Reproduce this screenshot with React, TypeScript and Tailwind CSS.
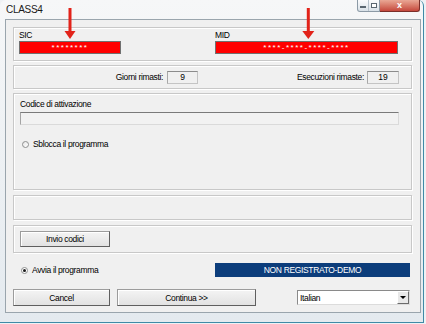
export default function App() {
  const txt = "text-[8.5px] leading-[10px] tracking-[-0.35px] text-black whitespace-nowrap";
  const group =
    "w-[399px] shrink-0 border border-[#c8c8c8] shadow-[inset_1px_1px_0_#ffffff,1px_1px_0_#ffffff]";
  const btn =
    "flex items-center justify-center border border-[#9c9c9c] border-r-[#5f5f5f] border-b-[#5f5f5f] bg-gradient-to-b from-[#f4f4f4] to-[#e2e2e2] shadow-[inset_1px_1px_0_#ffffff] text-[8.5px] leading-[10px] tracking-[-0.35px] text-black";
  const sunken =
    "flex items-center justify-center h-[13px] bg-[#f0f0f0] border border-[#c4c4c4] border-t-[#8c8c8c] border-l-[#a8a8a8] text-[8.5px] leading-[10px] text-black";

  return (
    <div className="w-[426px] h-[324px] bg-[#eef1f4] font-['Liberation_Sans',Arial,sans-serif] relative overflow-hidden">
      <div className="w-[424px] h-[323px] relative rounded-t-[6px] border-r border-b border-[#3f8aa6] bg-gradient-to-b from-[#f6f7f8] to-[#e4eaef] flex flex-col">
        <div className="h-[19px] shrink-0 flex items-start pl-[6px] pt-[4px] text-[10px] leading-[11px] tracking-[-0.3px] text-[#1a1a1a]">
          CLASS4
        </div>

        {/* caption buttons */}
        <div className="absolute top-0 left-[357px] flex">
          <div className="w-[23px] h-[12px] flex rounded-bl-[3px] border border-t-0 border-[#8c9aa6] bg-gradient-to-b from-[#fbfcfd] to-[#d9e1e8]">
            <div className="w-[11px] h-full flex items-center justify-center border-r border-[#b7c2cb]">
              <div className="w-[6px] h-[2px] mt-[3px] border border-[#5a6670] bg-white" />
            </div>
            <div className="w-[11px] h-full flex items-center justify-center">
              <div className="w-[6px] h-[5px] border border-[#5a6670] bg-white" />
            </div>
          </div>
          <div className="w-[40px] h-[12px] flex items-center justify-center rounded-br-[3px] border border-t-0 border-l-0 border-[#7b2f2a] bg-gradient-to-b from-[#e9a795] to-[#c4473c] text-white text-[9px] leading-[9px] font-bold">
            x
          </div>
        </div>

        {/* client */}
        <div className="ml-[5px] w-[416px] h-[294px] shrink-0 border border-[#9aa5ad] bg-[#f0f0f0] pl-[7px] pt-[7px] flex flex-col">
          {/* SIC / MID */}
          <div className={`${group} h-[34px] flex pl-[5px] pt-[2px]`}>
            <div className="w-[102px] flex flex-col">
              <span className={txt}>SIC</span>
              <div className="mt-[1px] h-[13px] bg-[#ff0000] border border-[#707070] flex items-center justify-center text-white text-[8px] leading-[8px] tracking-[1.5px]">
                ********
              </div>
            </div>
            <div className="ml-[94px] w-[183px] flex flex-col">
              <span className={txt}>MID</span>
              <div className="mt-[1px] h-[13px] bg-[#ff0000] border border-[#707070] flex items-center justify-center text-white text-[8px] leading-[8px] tracking-[1.5px]">
                ****-****-****-****
              </div>
            </div>
          </div>

          {/* counters */}
          <div className={`${group} h-[24px] mt-[4px] flex items-center`}>
            <div className="w-[184px] flex items-center justify-end">
              <span className={txt}>Giorni rimasti:</span>
              <div className={`${sunken} w-[31px] ml-[4px]`}>9</div>
            </div>
            <div className="w-[201px] flex items-center justify-end">
              <span className={txt}>Esecuzioni rimaste:</span>
              <div className={`${sunken} w-[32px] ml-[3px]`}>19</div>
            </div>
          </div>

          {/* activation */}
          <div className={`${group} h-[97px] mt-[4px] flex flex-col pl-[6px] pt-[5px]`}>
            <span className={txt}>Codice di attivazione</span>
            <div className="mt-[3px] w-[379px] h-[13px] bg-[#f2f2f2] border border-[#dadada] border-t-[#7a7a7a] border-l-[#a4a4a4]" />
            <div className="mt-[14px] h-[10px] flex items-center">
              <div className="ml-[2px] w-[7px] h-[7px] rounded-full border border-[#8e8f8f] bg-gradient-to-br from-[#e6e6e6] to-[#ffffff]" />
              <span className={`${txt} ml-[4px]`}>Sblocca il programma</span>
            </div>
          </div>

          <div className={`${group} h-[25px] mt-[5px]`} />

          <div className={`${group} h-[28px] mt-[5px] flex pl-[6px] pt-[5px]`}>
            <div className={`${btn} w-[90px] h-[16px]`}>Invio codici</div>
          </div>

          {/* status row */}
          <div className="mt-[10px] h-[14px] flex items-center">
            <div className="w-[202px] flex items-center">
              <div className="ml-[8px] w-[7px] h-[7px] rounded-full border border-[#8e8f8f] bg-white flex items-center justify-center">
                <div className="w-[3px] h-[3px] rounded-full bg-[#1a1a1a]" />
              </div>
              <span className={`${txt} ml-[4px]`}>Avvia il programma</span>
            </div>
            <div className="w-[195px] h-[14px] bg-[#0c3d7b] flex items-center justify-center text-white text-[8.5px] leading-[10px] tracking-[-0.35px]">
              NON REGISTRATO-DEMO
            </div>
          </div>

          {/* bottom buttons */}
          <div className="mt-[12px] h-[17px] flex items-center">
            <div className={`${btn} w-[97px] h-[17px]`}>Cancel</div>
            <div className={`${btn} w-[139px] h-[17px] ml-[7px]`}>Continua &gt;&gt;</div>
            <div className="ml-[41px] w-[113px] h-[15px] flex bg-white border border-[#8a8a8a] border-r-[#dcdcdc] border-b-[#dcdcdc]">
              <span className={`${txt} flex-1 pl-[2px] flex items-center`}>Italian</span>
              <div className="w-[12px] h-full flex items-center justify-center border border-[#ffffff] border-r-[#6b6b6b] border-b-[#6b6b6b] bg-[#e8e8e8]">
                <div className="w-0 h-0 border-l-[3px] border-r-[3px] border-t-[3px] border-l-transparent border-r-transparent border-t-black" />
              </div>
            </div>
          </div>
        </div>

        {/* red arrows */}
        <svg className="absolute top-0 left-0 pointer-events-none" width="426" height="60" viewBox="0 0 426 60">
          <rect x="68.5" y="8" width="3" height="25" fill="#e2231a" />
          <polygon points="64.5,31 75.5,31 70,39" fill="#e2231a" />
          <rect x="306.8" y="8" width="3" height="25" fill="#e2231a" />
          <polygon points="302.3,31 314.3,31 308.3,39" fill="#e2231a" />
        </svg>
      </div>
    </div>
  );
}
